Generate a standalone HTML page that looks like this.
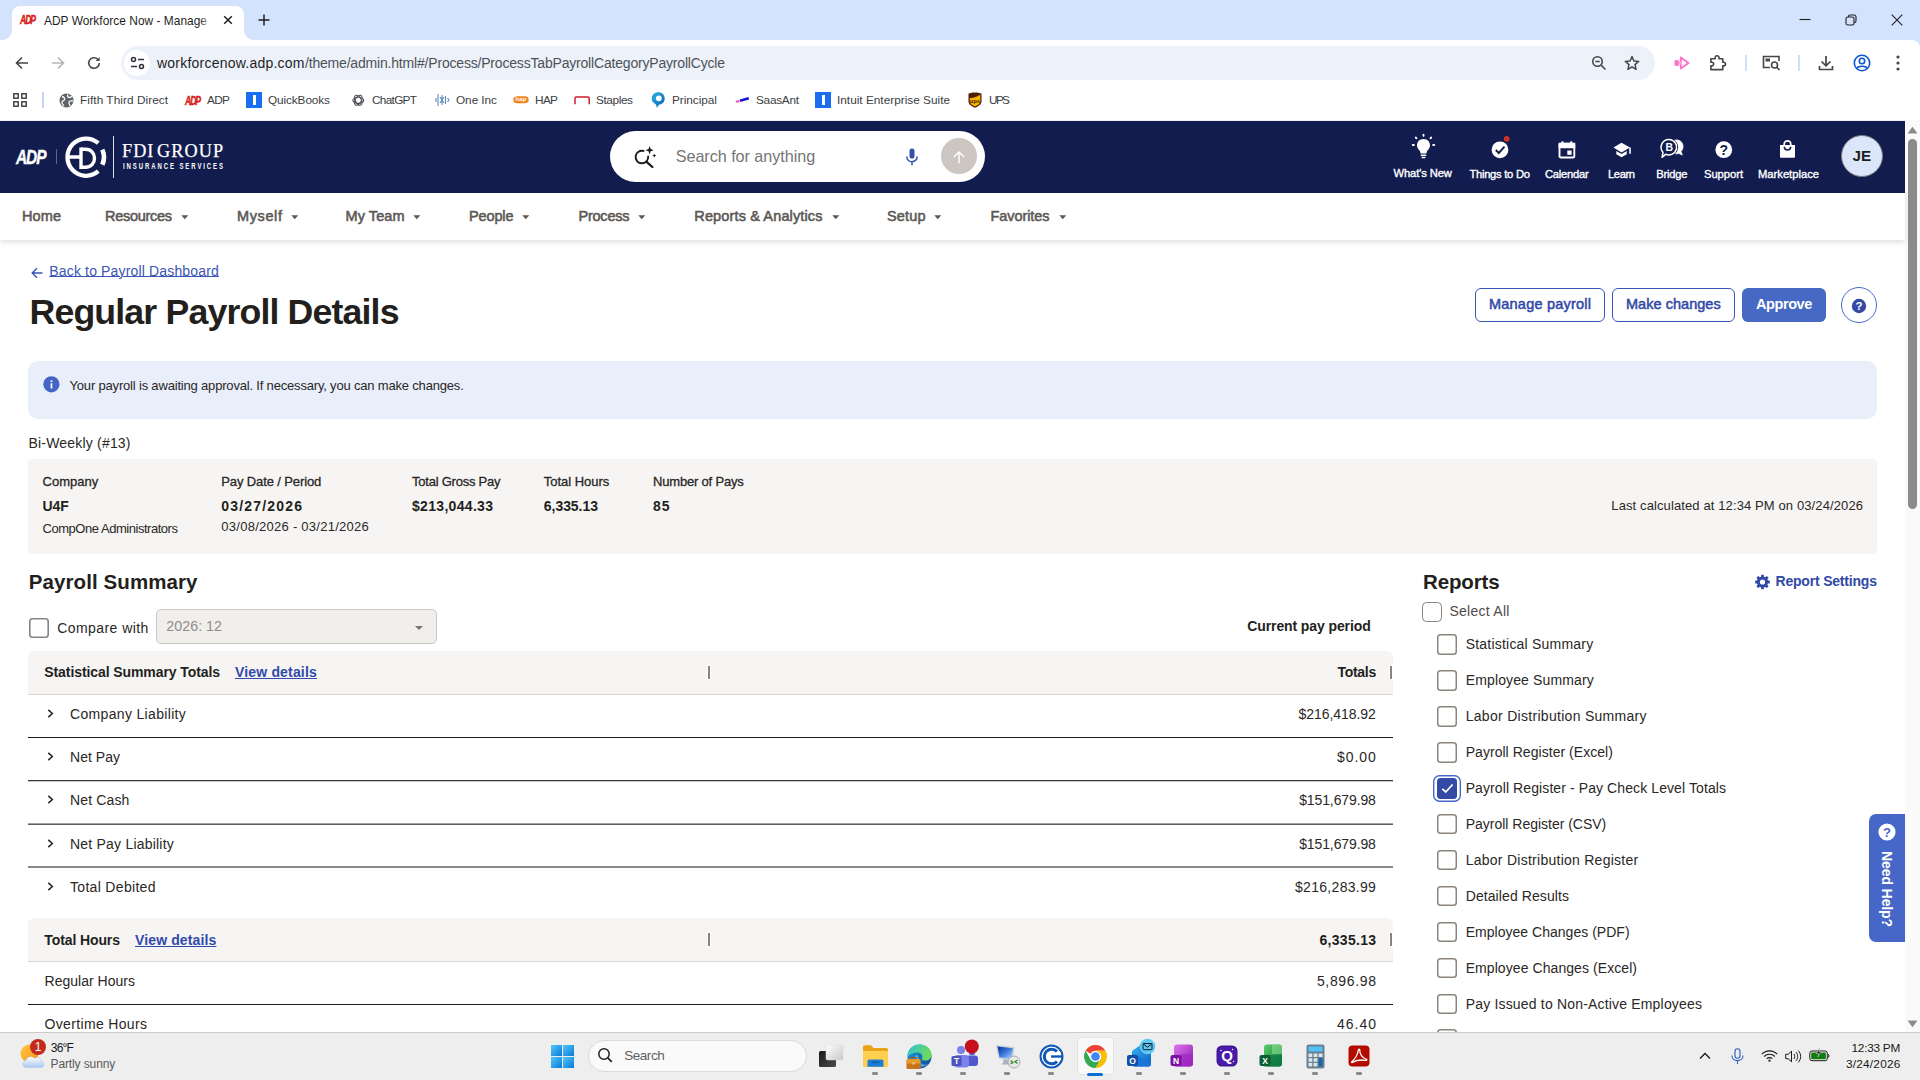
<!DOCTYPE html>
<html lang="en"><head><meta charset="utf-8"><title>ADP Workforce Now - Manage Payroll</title>
<style>
html,body{margin:0;padding:0;}
body{width:1920px;height:1080px;overflow:hidden;position:relative;background:#fff;font-family:"Liberation Sans",sans-serif;}
svg{position:absolute;overflow:visible;}
</style></head><body>

<div style="position:absolute;left:0px;top:0px;width:1920px;height:50px;background:#d3e3fd;"></div>
<svg style="left:0;top:0" width="260" height="41" viewBox="0 0 260 41"><path d="M0 40.500 C7.500 40 12 36 12 29 V14.500 C12 9.500 15.500 6 20.500 6 H235.500 C240.500 6 244 9.500 244 14.500 V29 C244 36 248.500 40 256 40.500 Z" fill="#fff"/></svg>
<div style="position:absolute;left:0px;top:40px;width:1920px;height:44px;background:#fff;border-radius:0 8px 0 0;"></div>
<div style="position:absolute;left:0px;top:84px;width:1920px;height:36px;background:#fff;"></div>
<div style="position:absolute;left:0px;top:120px;width:1920px;height:1px;background:#eceef1;"></div>
<div style="position:absolute;left:121px;top:46px;width:1534px;height:34px;background:#edf2fa;border-radius:17px;"></div>
<div style="position:absolute;left:124px;top:50px;width:26px;height:26px;background:#fff;border-radius:13px;"></div>
<span class="t" style="position:absolute;left:20px;top:13.89px;font:700 12.3px/12.3px 'Liberation Sans', sans-serif;color:#d81e1e;letter-spacing:-1.556px;white-space:pre;font-style:italic;-webkit-text-stroke:0.5px #d81e1e;transform:scaleX(0.7);transform-origin:0 0;">ADP</span>
<span class="t" style="position:absolute;left:44px;top:15.93px;font:400 11.9px/11.9px 'Liberation Sans', sans-serif;color:#1f1f1f;letter-spacing:0.034px;white-space:pre;">ADP Workforce Now - Manage</span>
<div style="position:absolute;left:200px;top:10px;width:14px;height:22px;background:linear-gradient(90deg,rgba(255,255,255,0),#fff);"></div>
<svg style="left:223px;top:15px" width="10" height="10" viewBox="0 0 10 10"><path d="M1.200 1.200 L8.800 8.800 M8.800 1.200 L1.200 8.800" stroke="#1f1f1f" stroke-width="1.500" fill="none"/></svg>
<svg style="left:258px;top:14px" width="12" height="12" viewBox="0 0 12 12"><path d="M6 0.500 V11.500 M0.500 6 H11.500" stroke="#1f1f1f" stroke-width="1.500" fill="none"/></svg>
<svg style="left:1799px;top:14px" width="12" height="12" viewBox="0 0 12 12"><path d="M0.500 5.500 H11.500" stroke="#1f1f1f" stroke-width="1.100" fill="none"/></svg>
<svg style="left:1845px;top:14px" width="12" height="12" viewBox="0 0 12 12"><rect x="1" y="3" width="8" height="8" rx="1.800" stroke="#1f1f1f" stroke-width="1.100" fill="none"/><path d="M3.500 3 V2.500 C3.500 1.600 4.100 1 5 1 H9 C10.200 1 11 1.800 11 3 V7 C11 7.900 10.400 8.500 9.500 8.500 H9" stroke="#1f1f1f" stroke-width="1.100" fill="none"/></svg>
<svg style="left:1891px;top:14px" width="12" height="12" viewBox="0 0 12 12"><path d="M0.700 0.700 L11.300 11.300 M11.300 0.700 L0.700 11.300" stroke="#1f1f1f" stroke-width="1.100" fill="none"/></svg>
<svg style="left:15px;top:56px" width="14" height="14" viewBox="0 0 14 14"><path d="M13 7 H1.500 M7 1.500 L1.500 7 L7 12.500" stroke="#444746" stroke-width="1.600" fill="none"/></svg>
<svg style="left:51px;top:56px" width="14" height="14" viewBox="0 0 14 14"><path d="M1 7 H12.500 M7 1.500 L12.500 7 L7 12.500" stroke="#b4b6b8" stroke-width="1.600" fill="none"/></svg>
<svg style="left:87px;top:56px" width="14" height="14" viewBox="0 0 14 14"><path d="M12.300 7 A5.300 5.300 0 1 1 10.700 3.200" stroke="#444746" stroke-width="1.600" fill="none"/><path d="M12.600 1 V5 H8.600 Z" fill="#444746"/></svg>
<svg style="left:130px;top:56px" width="15" height="14" viewBox="0 0 15 14"><g stroke="#30323a" stroke-width="1.500" fill="none"><circle cx="3.500" cy="3.500" r="2"/><path d="M8 3.500 H14"/><circle cx="11.500" cy="10.500" r="2"/><path d="M1 10.500 H7"/></g></svg>
<span class="t" style="position:absolute;left:157px;top:56.15px;font:400 14px/14px 'Liberation Sans', sans-serif;color:#1f1f1f;letter-spacing:0.227px;white-space:pre;">workforcenow.adp.com</span>
<span class="t" style="position:absolute;left:305px;top:56.15px;font:400 14px/14px 'Liberation Sans', sans-serif;color:#4d5156;letter-spacing:-0.188px;white-space:pre;">/theme/admin.html#/Process/ProcessTabPayrollCategoryPayrollCycle</span>
<svg style="left:1591px;top:55px" width="16" height="16" viewBox="0 0 16 16"><g stroke="#444746" stroke-width="1.600" fill="none"><circle cx="6.500" cy="6.500" r="4.700"/><path d="M10 10 L14.500 14.500 M4.300 6.500 H8.700"/></g></svg>
<svg style="left:1624px;top:55px" width="16" height="16" viewBox="0 0 16 16"><path d="M8 1.500 L9.900 6 L14.700 6.400 L11 9.600 L12.100 14.300 L8 11.800 L3.900 14.300 L5 9.600 L1.300 6.400 L6.100 6 Z" stroke="#444746" stroke-width="1.500" fill="none" stroke-linejoin="round"/></svg>
<svg style="left:1674px;top:56px" width="17" height="14" viewBox="0 0 17 14"><path d="M0.500 4.200 H4.800 V9.800 H0.500 Z" fill="#ff6ec7"/><path d="M6.800 1.500 L14.500 7 L6.800 12.500 Z" stroke="#ff6ec7" stroke-width="1.900" fill="none" stroke-linejoin="round"/><path d="M4.800 5.500 H7.500 V8.500 H4.800 Z" fill="#ffa8dc"/></svg>
<svg style="left:1709px;top:54px" width="18" height="18" viewBox="0 0 18 18"><path d="M2 5 H6.500 V3.800 C6.500 1.200 10.500 1.200 10.500 3.800 V5 H14.500 V8.700 H15.500 C18 8.700 18 12.500 15.500 12.500 H14.500 V16.500 H2 V12.500 H3 C5.500 12.500 5.500 8.700 3 8.700 H2 Z" stroke="#444746" stroke-width="1.700" fill="none" stroke-linejoin="round" transform="scale(0.95)"/></svg>
<div style="position:absolute;left:1744.5px;top:55px;width:2px;height:16px;background:#cfdff8;"></div>
<svg style="left:1762px;top:55px" width="19" height="16" viewBox="0 0 19 16"><g stroke="#444746" stroke-width="1.600" fill="none"><path d="M8 12.500 H1.500 V1.500 H17 V6"/><circle cx="12.500" cy="10" r="3"/><path d="M14.700 12.200 L17.500 15"/></g><path d="M3.500 3.500 H8 V6.500 H3.500 Z" fill="#444746"/></svg>
<div style="position:absolute;left:1798px;top:55px;width:2px;height:16px;background:#cfdff8;"></div>
<svg style="left:1818px;top:55px" width="16" height="16" viewBox="0 0 16 16"><g stroke="#444746" stroke-width="1.700" fill="none"><path d="M8 1 V10.500 M3.500 6.500 L8 10.800 L12.500 6.500"/><path d="M1.500 11 V14.500 H14.500 V11"/></g></svg>
<svg style="left:1853px;top:54px" width="18" height="18" viewBox="0 0 18 18"><g stroke="#0b57d0" stroke-width="1.600" fill="none"><circle cx="9" cy="9" r="7.700"/><circle cx="9" cy="7" r="2.700"/><path d="M3.800 14.200 C5.500 11.500 12.500 11.500 14.200 14.200"/></g></svg>
<svg style="left:1896px;top:55px" width="4" height="16" viewBox="0 0 4 16"><g fill="#444746"><circle cx="2" cy="2" r="1.600"/><circle cx="2" cy="8" r="1.600"/><circle cx="2" cy="14" r="1.600"/></g></svg>
<svg style="left:13px;top:93px" width="14" height="14" viewBox="0 0 14 14"><g stroke="#444746" stroke-width="1.500" fill="none"><rect x="0.800" y="0.800" width="4.400" height="4.400"/><rect x="8.800" y="0.800" width="4.400" height="4.400"/><rect x="0.800" y="8.800" width="4.400" height="4.400"/><rect x="8.800" y="8.800" width="4.400" height="4.400"/></g></svg>
<div style="position:absolute;left:42px;top:92px;width:2px;height:16px;background:#c3d5f4;"></div>
<svg style="left:59px;top:93px" width="15" height="15" viewBox="0 0 15 15"><circle cx="7.500" cy="7.500" r="7" fill="#5f6368"/><path d="M3 3.500 C5 4 6 5 5.500 6.500 C5 8 3.500 7.500 3 9 C2.500 10.500 4 11.500 5 13 M9 1.500 C8 3 9 4.500 10.500 4.500 C12 4.500 12.500 3.500 13 3.200 M13.800 8 C12 7.500 10 8 10 9.500 C10 11 11 11.500 11 13" stroke="#fff" stroke-width="1.300" fill="none"/></svg>
<span class="t" style="position:absolute;left:80px;top:95.01px;font:400 11.8px/11.8px 'Liberation Sans', sans-serif;color:#3c4043;letter-spacing:0.061px;white-space:pre;">Fifth Third Direct</span>
<span class="t" style="position:absolute;left:185px;top:95.19px;font:700 12.3px/12.3px 'Liberation Sans', sans-serif;color:#d81e1e;letter-spacing:-1.556px;white-space:pre;font-style:italic;-webkit-text-stroke:0.5px #d81e1e;transform:scaleX(0.7);transform-origin:0 0;">ADP</span>
<span class="t" style="position:absolute;left:207px;top:95.01px;font:400 11.8px/11.8px 'Liberation Sans', sans-serif;color:#3c4043;letter-spacing:-0.633px;white-space:pre;">ADP</span>
<div style="position:absolute;left:246px;top:92px;width:16px;height:16px;background:#1a6df0;"></div>
<div style="position:absolute;left:252.5px;top:95px;width:3px;height:10px;background:#fff;"></div>
<span class="t" style="position:absolute;left:268px;top:95.01px;font:400 11.8px/11.8px 'Liberation Sans', sans-serif;color:#3c4043;letter-spacing:-0.106px;white-space:pre;">QuickBooks</span>
<svg style="left:351.700px;top:93.700px" width="12.600" height="12.600" viewBox="0 0 15 15"><g stroke="#4a4d51" stroke-width="1.350" fill="none"><ellipse cx="7.500" cy="7.500" rx="6.500" ry="3.600"/><ellipse cx="7.500" cy="7.500" rx="6.500" ry="3.600" transform="rotate(60 7.500 7.500)"/><ellipse cx="7.500" cy="7.500" rx="6.500" ry="3.600" transform="rotate(120 7.500 7.500)"/></g></svg>
<span class="t" style="position:absolute;left:372px;top:95.01px;font:400 11.8px/11.8px 'Liberation Sans', sans-serif;color:#3c4043;letter-spacing:-0.695px;white-space:pre;">ChatGPT</span>
<svg style="left:435px;top:92px" width="15" height="16" viewBox="0 0 15 16"><g stroke="#5b8db8" stroke-width="1.100" fill="none"><path d="M1 6 V10 M3 2 V14 M5 5 L9 11 M9 5 L5 11 M10.500 4 V12 M12.500 6 L14 8 L12.500 10 M7 3 V13"/></g></svg>
<span class="t" style="position:absolute;left:456px;top:95.01px;font:400 11.8px/11.8px 'Liberation Sans', sans-serif;color:#3c4043;letter-spacing:-0.052px;white-space:pre;">One Inc</span>
<svg style="left:513px;top:96px" width="16" height="7.500" viewBox="0 0 17 9" preserveAspectRatio="none"><rect x="0.300" y="0.300" width="16.400" height="8.400" rx="4.200" fill="#f4821f"/><text x="8.500" y="6.500" font-family="Liberation Sans, sans-serif" font-size="6.500" font-weight="700" text-anchor="middle" fill="#fff">hap</text></svg>
<span class="t" style="position:absolute;left:535px;top:95.01px;font:400 11.8px/11.8px 'Liberation Sans', sans-serif;color:#3c4043;letter-spacing:-0.633px;white-space:pre;">HAP</span>
<svg style="left:573.500px;top:95.500px" width="16.500" height="9" viewBox="0 0 16.500 9"><path d="M1 8.300 V2.200 C1 1.400 1.400 1 2.200 1 H14 C14.800 1 15.200 1.400 15.200 2.200 V8.300" stroke="#cc1f2d" stroke-width="1.500" fill="none"/></svg>
<span class="t" style="position:absolute;left:596px;top:95.01px;font:400 11.8px/11.8px 'Liberation Sans', sans-serif;color:#3c4043;letter-spacing:-0.393px;white-space:pre;">Staples</span>
<svg style="left:651px;top:92px" width="14" height="16" viewBox="0 0 14 16"><defs><linearGradient id="pr" x1="0" y1="0" x2="1" y2="1"><stop offset="0" stop-color="#2fb4e9"/><stop offset="1" stop-color="#0061a8"/></linearGradient></defs><path d="M7.300 0.300 C11 0.300 13.700 3 13.700 6.500 C13.700 10 11 12.300 8 12.600 C7.500 14 6.800 15 5.500 15.700 C5.800 14 5.300 12.500 4 11.800 C1.800 10.800 0.700 8.800 0.700 6.500 C0.700 3 3.500 0.300 7.300 0.300 Z" fill="url(#pr)"/><circle cx="7.800" cy="6.300" r="2.900" fill="#fff"/></svg>
<span class="t" style="position:absolute;left:672px;top:95.01px;font:400 11.8px/11.8px 'Liberation Sans', sans-serif;color:#3c4043;letter-spacing:-0.031px;white-space:pre;">Principal</span>
<svg style="left:735px;top:96px" width="15" height="8" viewBox="0 0 15 8"><path d="M0.800 5.800 L4.500 5" stroke="#f04fc0" stroke-width="2" fill="none"/><path d="M5 4.700 L13.800 2.300" stroke="#1a10d0" stroke-width="2.600" fill="none"/></svg>
<span class="t" style="position:absolute;left:756px;top:95.01px;font:400 11.8px/11.8px 'Liberation Sans', sans-serif;color:#3c4043;letter-spacing:-0.268px;white-space:pre;">SaasAnt</span>
<div style="position:absolute;left:815px;top:92px;width:16px;height:16px;background:#1a6df0;"></div>
<div style="position:absolute;left:821.5px;top:95px;width:3px;height:10px;background:#fff;"></div>
<span class="t" style="position:absolute;left:837px;top:95.01px;font:400 11.8px/11.8px 'Liberation Sans', sans-serif;color:#3c4043;letter-spacing:0.009px;white-space:pre;">Intuit Enterprise Suite</span>
<svg style="left:968px;top:92px" width="14" height="16" viewBox="0 0 14 16"><path d="M0.500 1.500 C4 0 10 0 13.500 1.500 V9.500 C13.500 12.500 10 14.500 7 15.800 C4 14.500 0.500 12.500 0.500 9.500 Z" fill="#4b1e09"/><path d="M1.800 6 C5 6.500 9 5 12.300 2.500 V9.400 C12.300 11.600 9.500 13.300 7 14.400 C4.500 13.300 1.800 11.600 1.800 9.400 Z" fill="#f7b500"/><text x="7" y="11.300" font-family="Liberation Sans, sans-serif" font-size="5.500" font-weight="700" text-anchor="middle" fill="#4b1e09">ups</text></svg>
<span class="t" style="position:absolute;left:989px;top:95.01px;font:400 11.8px/11.8px 'Liberation Sans', sans-serif;color:#3c4043;letter-spacing:-1.633px;white-space:pre;">UPS</span>
<div style="position:absolute;left:0px;top:121px;width:1905px;height:72px;background:#121c4e;"></div>
<div style="position:absolute;left:1905px;top:120px;width:15px;height:912px;background:#fafafa;"></div>
<svg style="left:1907px;top:126px" width="11" height="8" viewBox="0 0 11 8"><path d="M0.500 7.500 L5.500 0.800 L10.500 7.500 Z" fill="#8b8b8b"/></svg>
<div style="position:absolute;left:1908px;top:139px;width:9px;height:370px;background:#8b8b8b;border-radius:4.5px;"></div>
<svg style="left:1907px;top:1020px" width="11" height="8" viewBox="0 0 11 8"><path d="M0.500 0.500 L5.500 7.200 L10.500 0.500 Z" fill="#8b8b8b"/></svg>
<span class="t" style="position:absolute;left:15.8px;top:146.72px;font:700 20.3px/20.3px 'Liberation Sans', sans-serif;color:#fff;letter-spacing:-1.348px;white-space:pre;font-style:italic;-webkit-text-stroke:0.4px #fff;transform:scaleX(0.76);transform-origin:0 0;">ADP</span>
<div style="position:absolute;left:56px;top:149px;width:1px;height:15px;background:rgba(255,255,255,0.32);"></div>
<svg style="left:64px;top:136px" width="43" height="43" viewBox="0 0 43 43"><g fill="none" stroke="#fff"><path d="M34.300 7.200 A18.600 18.600 0 1 0 34.300 35.200" stroke-width="4.300"/><path d="M38.300 13.600 A18.400 18.400 0 0 1 38.300 28.800" stroke-width="4.600"/><path d="M4.500 21 H17" stroke-width="3.500"/><path d="M17 11.500 V33" stroke-width="3.400"/><path d="M17 13.200 H21.500 C33.500 13.200 33.500 31.300 21.500 31.300 H17" stroke-width="3.400"/></g></svg>
<div style="position:absolute;left:113px;top:136px;width:1px;height:41.5px;background:rgba(255,255,255,0.85);"></div>
<span class="t" style="position:absolute;left:122px;top:141.79px;font:400 18.2px/18.2px 'Liberation Serif', serif;color:#fff;letter-spacing:1.061px;white-space:pre;word-spacing:-3px;-webkit-text-stroke:0.25px #fff;">FDI GROUP</span>
<span class="t" style="position:absolute;left:122.6px;top:162.17px;font:700 8.3px/8.3px 'Liberation Sans', sans-serif;color:#fff;letter-spacing:2.674px;white-space:pre;transform:scaleX(0.72);transform-origin:0 0;">INSURANCE SERVICES</span>
<div style="position:absolute;left:610px;top:131px;width:375px;height:51px;background:#fff;border-radius:25.500px;"></div>
<svg style="left:632px;top:144px" width="26" height="26" viewBox="0 0 26 26"><g stroke="#1f1b19" fill="none" stroke-linecap="round"><path d="M11.530 6.910 A6.300 6.300 0 1 0 16.180 12.450" stroke-width="1.900"/><path d="M14.600 17.800 L20.400 23" stroke-width="2.300"/></g><path d="M17.600 2 L18.700 5.100 L21.800 6.200 L18.700 7.300 L17.600 10.400 L16.500 7.300 L13.400 6.200 L16.500 5.100 Z" fill="#1f1b19"/><path d="M22.300 9.400 L22.900 11 L24.500 11.600 L22.900 12.200 L22.300 13.800 L21.700 12.200 L20.100 11.600 L21.700 11 Z" fill="#1f1b19"/></svg>
<span class="t" style="position:absolute;left:675.7px;top:148.29px;font:400 16.2px/16.2px 'Liberation Sans', sans-serif;color:#757575;letter-spacing:-0.049px;white-space:pre;">Search for anything</span>
<svg style="left:904.700px;top:148.400px" width="14" height="17.800" viewBox="0 0 14 20"><rect x="4.200" y="0.500" width="5.600" height="11.600" rx="2.800" fill="#3350a8"/><path d="M1.200 9.500 C1.200 17.300 12.800 17.300 12.800 9.500 M7 15.500 V19.500" stroke="#3350a8" stroke-width="1.700" fill="none"/></svg>
<div style="position:absolute;left:940.8px;top:137.9px;width:36.4px;height:36.4px;background:#cbc6c1;border-radius:50%;"></div>
<svg style="left:952.600px;top:150.500px" width="12" height="13" viewBox="0 0 12 13"><path d="M6 12.200 V1 M0.900 6.100 L6 1 L11.100 6.100" stroke="#fff" stroke-width="1.400" fill="none"/></svg>
<svg style="left:1411px;top:133px" width="25" height="26" viewBox="0 0 25 26"><g fill="#fff"><path d="M12.500 6 C8.600 6 6 8.900 6 12.300 C6 14.700 7.300 16.300 8.500 17.600 C9.200 18.400 9.500 19.300 9.500 20.500 H15.500 C15.500 19.300 15.800 18.400 16.500 17.600 C17.700 16.300 19 14.700 19 12.300 C19 8.900 16.400 6 12.500 6 Z"/><rect x="9.700" y="21.500" width="5.600" height="1.600" rx="0.600"/><rect x="10.500" y="23.800" width="4" height="1.500" rx="0.700"/><rect x="11.600" y="0.800" width="1.800" height="3" rx="0.800"/><rect x="4.200" y="3.600" width="1.900" height="2.800" rx="0.800" transform="rotate(-45 5.100 5)"/><rect x="18.900" y="3.600" width="1.900" height="2.800" rx="0.800" transform="rotate(45 19.900 5)"/><rect x="0.800" y="11" width="3" height="1.900" rx="0.800"/><rect x="21.200" y="11" width="3" height="1.900" rx="0.800"/></g></svg>
<svg style="left:1490px;top:134px" width="22" height="26" viewBox="0 0 22 26"><circle cx="10" cy="15.800" r="8.400" fill="#fff"/><path d="M5.800 16 L8.800 19 L14.500 12.600" stroke="#121c4e" stroke-width="1.900" fill="none"/><circle cx="16.700" cy="4.800" r="3.900" fill="#121c4e"/><circle cx="16.700" cy="4.800" r="2.900" fill="#d0311e"/></svg>
<svg style="left:1558px;top:140px" width="18" height="19" viewBox="0 0 18 19"><path d="M2.800 3.800 H15 C15.800 3.800 16.300 4.300 16.300 5.100 V16.200 C16.300 17 15.800 17.500 15 17.500 H2.800 C2 17.500 1.500 17 1.500 16.200 V5.100 C1.500 4.300 2 3.800 2.800 3.800 Z" stroke="#fff" stroke-width="1.900" fill="none"/><path d="M1.500 3.800 H16.300 V7.300 H1.500 Z M4.500 1.200 V4 M13.300 1.200 V4" stroke="#fff" stroke-width="1.900" fill="#fff"/><rect x="9.300" y="10.500" width="4.300" height="4.300" fill="#fff"/></svg>
<svg style="left:1613px;top:142px" width="19" height="16" viewBox="0 0 19 16"><path d="M8.500 0.800 L17 5.600 L8.500 10.400 L0.500 5.600 Z" fill="#fff"/><path d="M3.300 9 V12.300 L8.500 15.200 L13.800 12.300 V9 L8.500 12 Z" fill="#fff"/><path d="M17 5.600 V11.800" stroke="#fff" stroke-width="1.600"/></svg>
<svg style="left:1660px;top:138px" width="24" height="21" viewBox="0 0 24 21"><path d="M14 2.500 C19 0.500 23.300 4 23 9 C22.900 11 22 12.500 21 13.500 L22.300 17 L18.500 15.300 C17.500 15.800 16.500 16 15.500 16" fill="#fff" stroke="#fff" stroke-width="0.800"/><circle cx="9.200" cy="9.300" r="8.900" fill="#121c4e"/><path d="M9.200 1.400 A7.800 7.800 0 1 1 5.600 16.300 L2 19.300 L3 14.300 A7.800 7.800 0 0 1 9.200 1.400 Z" stroke="#fff" stroke-width="1.500" fill="#121c4e" stroke-linejoin="round"/><text x="9.400" y="13.300" font-family="Liberation Sans, sans-serif" font-size="10.500" font-weight="700" text-anchor="middle" fill="#fff">B</text></svg>
<svg style="left:1715px;top:141px" width="18" height="18" viewBox="0 0 18 18"><circle cx="8.800" cy="8.700" r="8.400" fill="#fff"/><text x="8.800" y="13.700" font-family="Liberation Sans, sans-serif" font-size="14" font-weight="700" text-anchor="middle" fill="#121c4e">?</text></svg>
<svg style="left:1779px;top:139px" width="17" height="20" viewBox="0 0 17 20"><path d="M1 6 H16 V17.500 C16 18.300 15.500 18.800 14.700 18.800 H2.300 C1.500 18.800 1 18.300 1 17.500 Z" fill="#fff"/><path d="M5.200 7 V5 C5.200 0.800 11.800 0.800 11.800 5 V7" stroke="#fff" stroke-width="1.700" fill="none"/><path d="M5.300 7.800 C5.300 12 11.700 12 11.700 7.800" stroke="#121c4e" stroke-width="1.500" fill="none"/></svg>
<span class="t" style="position:absolute;left:1393.5px;top:167.52px;font:400 11.2px/11.2px 'Liberation Sans', sans-serif;color:#fff;letter-spacing:-0.105px;white-space:pre;-webkit-text-stroke:0.35px #fff;">What's New</span>
<span class="t" style="position:absolute;left:1469.4px;top:168.62px;font:400 11.2px/11.2px 'Liberation Sans', sans-serif;color:#fff;letter-spacing:-0.258px;white-space:pre;-webkit-text-stroke:0.35px #fff;">Things to Do</span>
<span class="t" style="position:absolute;left:1545px;top:168.62px;font:400 11.2px/11.2px 'Liberation Sans', sans-serif;color:#fff;letter-spacing:-0.229px;white-space:pre;-webkit-text-stroke:0.35px #fff;">Calendar</span>
<span class="t" style="position:absolute;left:1608px;top:168.62px;font:400 11.2px/11.2px 'Liberation Sans', sans-serif;color:#fff;letter-spacing:-0.406px;white-space:pre;-webkit-text-stroke:0.35px #fff;">Learn</span>
<span class="t" style="position:absolute;left:1656.3px;top:168.62px;font:400 11.2px/11.2px 'Liberation Sans', sans-serif;color:#fff;letter-spacing:-0.229px;white-space:pre;-webkit-text-stroke:0.35px #fff;">Bridge</span>
<span class="t" style="position:absolute;left:1704px;top:168.62px;font:400 11.2px/11.2px 'Liberation Sans', sans-serif;color:#fff;letter-spacing:-0.031px;white-space:pre;-webkit-text-stroke:0.35px #fff;">Support</span>
<span class="t" style="position:absolute;left:1758px;top:168.62px;font:400 11.2px/11.2px 'Liberation Sans', sans-serif;color:#fff;letter-spacing:0.006px;white-space:pre;-webkit-text-stroke:0.35px #fff;">Marketplace</span>
<div style="position:absolute;left:1840.5px;top:135px;width:42px;height:42px;background:#dbe6fa;border-radius:50%;border:1px solid #7d7a78;box-sizing:border-box;"></div>
<span class="t" style="position:absolute;left:1852.6px;top:148.33px;font:700 15.2px/15.2px 'Liberation Sans', sans-serif;color:#221d1a;letter-spacing:-0.078px;white-space:pre;">JE</span>
<div style="position:absolute;left:0px;top:193px;width:1905px;height:47px;background:#fff;box-shadow:0 2px 6px rgba(0,0,0,0.140);"></div>
<span class="t" style="position:absolute;left:22px;top:208.93px;font:400 14.5px/14.5px 'Liberation Sans', sans-serif;color:#5c5855;letter-spacing:0.104px;white-space:pre;-webkit-text-stroke:0.55px #5c5855;">Home</span>
<span class="t" style="position:absolute;left:105px;top:208.93px;font:400 14.5px/14.5px 'Liberation Sans', sans-serif;color:#5c5855;letter-spacing:-0.289px;white-space:pre;-webkit-text-stroke:0.55px #5c5855;">Resources</span>
<svg style="left:180.8px;top:215px" width="8" height="5" viewBox="0 0 8 5"><path d="M0.300 0.300 H7.300 L3.800 4.200 Z" fill="#5c5855"/></svg>
<span class="t" style="position:absolute;left:237px;top:208.93px;font:400 14.5px/14.5px 'Liberation Sans', sans-serif;color:#5c5855;letter-spacing:0.619px;white-space:pre;-webkit-text-stroke:0.55px #5c5855;">Myself</span>
<svg style="left:290.5px;top:215px" width="8" height="5" viewBox="0 0 8 5"><path d="M0.300 0.300 H7.300 L3.800 4.200 Z" fill="#5c5855"/></svg>
<span class="t" style="position:absolute;left:345.5px;top:208.93px;font:400 14.5px/14.5px 'Liberation Sans', sans-serif;color:#5c5855;letter-spacing:0.073px;white-space:pre;-webkit-text-stroke:0.55px #5c5855;">My Team</span>
<svg style="left:413px;top:215px" width="8" height="5" viewBox="0 0 8 5"><path d="M0.300 0.300 H7.300 L3.800 4.200 Z" fill="#5c5855"/></svg>
<span class="t" style="position:absolute;left:469px;top:208.93px;font:400 14.5px/14.5px 'Liberation Sans', sans-serif;color:#5c5855;letter-spacing:-0.131px;white-space:pre;-webkit-text-stroke:0.55px #5c5855;">People</span>
<svg style="left:522px;top:215px" width="8" height="5" viewBox="0 0 8 5"><path d="M0.300 0.300 H7.300 L3.800 4.200 Z" fill="#5c5855"/></svg>
<span class="t" style="position:absolute;left:578.5px;top:208.93px;font:400 14.5px/14.5px 'Liberation Sans', sans-serif;color:#5c5855;letter-spacing:-0.232px;white-space:pre;-webkit-text-stroke:0.55px #5c5855;">Process</span>
<svg style="left:638px;top:215px" width="8" height="5" viewBox="0 0 8 5"><path d="M0.300 0.300 H7.300 L3.800 4.200 Z" fill="#5c5855"/></svg>
<span class="t" style="position:absolute;left:694.3px;top:208.93px;font:400 14.5px/14.5px 'Liberation Sans', sans-serif;color:#5c5855;letter-spacing:0.137px;white-space:pre;-webkit-text-stroke:0.55px #5c5855;">Reports &amp; Analytics</span>
<svg style="left:831.5px;top:215px" width="8" height="5" viewBox="0 0 8 5"><path d="M0.300 0.300 H7.300 L3.800 4.200 Z" fill="#5c5855"/></svg>
<span class="t" style="position:absolute;left:887px;top:208.93px;font:400 14.5px/14.5px 'Liberation Sans', sans-serif;color:#5c5855;letter-spacing:0.148px;white-space:pre;-webkit-text-stroke:0.55px #5c5855;">Setup</span>
<svg style="left:934px;top:215px" width="8" height="5" viewBox="0 0 8 5"><path d="M0.300 0.300 H7.300 L3.800 4.200 Z" fill="#5c5855"/></svg>
<span class="t" style="position:absolute;left:990.5px;top:208.93px;font:400 14.5px/14.5px 'Liberation Sans', sans-serif;color:#5c5855;letter-spacing:-0.080px;white-space:pre;-webkit-text-stroke:0.55px #5c5855;">Favorites</span>
<svg style="left:1058.5px;top:215px" width="8" height="5" viewBox="0 0 8 5"><path d="M0.300 0.300 H7.300 L3.800 4.200 Z" fill="#5c5855"/></svg>
<svg style="left:30.500px;top:266.500px" width="12" height="12" viewBox="0 0 12 12"><path d="M11.500 6 H1.200 M6 1.200 L1.200 6 L6 10.800" stroke="#3a55b5" stroke-width="1.400" fill="none"/></svg>
<span class="t" style="position:absolute;left:49.3px;top:264.15px;font:400 14px/14px 'Liberation Sans', sans-serif;color:#3a55b5;letter-spacing:0.156px;white-space:pre;text-decoration:underline;text-decoration-thickness:1px;text-underline-offset:0px;">Back to Payroll Dashboard</span>
<span class="t" style="position:absolute;left:29.5px;top:295.18px;font:700 35.7px/35.7px 'Liberation Sans', sans-serif;color:#231f1c;letter-spacing:-0.852px;white-space:pre;">Regular Payroll Details</span>
<div style="position:absolute;left:1475px;top:288px;width:130px;height:34px;background:#fff;border-radius:6px;border:1px solid #3a55b5;box-sizing:border-box;"></div>
<span class="t" style="position:absolute;left:1489px;top:297.03px;font:400 14.5px/14.5px 'Liberation Sans', sans-serif;color:#3048a6;letter-spacing:0.219px;white-space:pre;-webkit-text-stroke:0.5px #3048a6;">Manage payroll</span>
<div style="position:absolute;left:1612px;top:288px;width:123px;height:34px;background:#fff;border-radius:6px;border:1px solid #3a55b5;box-sizing:border-box;"></div>
<span class="t" style="position:absolute;left:1626px;top:297.03px;font:400 14.5px/14.5px 'Liberation Sans', sans-serif;color:#3048a6;letter-spacing:0.035px;white-space:pre;-webkit-text-stroke:0.5px #3048a6;">Make changes</span>
<div style="position:absolute;left:1742px;top:288px;width:84px;height:33.8px;background:#4669c4;border-radius:6px;"></div>
<span class="t" style="position:absolute;left:1756px;top:297.03px;font:700 14.5px/14.5px 'Liberation Sans', sans-serif;color:#fff;letter-spacing:-0.421px;white-space:pre;">Approve</span>
<div style="position:absolute;left:1840.8px;top:287.2px;width:36px;height:36px;background:#fff;border-radius:50%;border:1px solid #4669c4;box-sizing:border-box;"></div>
<svg style="left:1850.800px;top:297.600px" width="16" height="16" viewBox="0 0 16 16"><circle cx="8" cy="8" r="7.200" fill="#3349a5"/><text x="8" y="12" font-family="Liberation Sans, sans-serif" font-size="11.500" font-weight="700" text-anchor="middle" fill="#fff">?</text></svg>
<div style="position:absolute;left:28px;top:361px;width:1849px;height:58px;background:#e8eefa;border-radius:10px;"></div>
<svg style="left:42.900px;top:376.400px" width="17" height="17" viewBox="0 0 17 17"><circle cx="8.400" cy="8.300" r="8.100" fill="#4565c6"/><rect x="7.600" y="7.300" width="1.700" height="5.200" fill="#fff"/><rect x="7.600" y="4.300" width="1.700" height="1.800" fill="#fff"/></svg>
<span class="t" style="position:absolute;left:69.5px;top:379.00px;font:400 13px/13px 'Liberation Sans', sans-serif;color:#2a2725;letter-spacing:-0.182px;white-space:pre;">Your payroll is awaiting approval. If necessary, you can make changes.</span>
<span class="t" style="position:absolute;left:28.5px;top:436.15px;font:400 14px/14px 'Liberation Sans', sans-serif;color:#2a2725;letter-spacing:0.191px;white-space:pre;">Bi-Weekly (#13)</span>
<div style="position:absolute;left:28px;top:459px;width:1849px;height:95px;background:#f6f5f4;border-radius:4px;"></div>
<span class="t" style="position:absolute;left:42.5px;top:475.30px;font:400 13px/13px 'Liberation Sans', sans-serif;color:#2a2725;letter-spacing:0.027px;white-space:pre;-webkit-text-stroke:0.3px;">Company</span>
<span class="t" style="position:absolute;left:42.5px;top:499.45px;font:700 14px/14px 'Liberation Sans', sans-serif;color:#231f1c;letter-spacing:-0.077px;white-space:pre;">U4F</span>
<span class="t" style="position:absolute;left:42.5px;top:522.00px;font:400 13px/13px 'Liberation Sans', sans-serif;color:#2a2725;letter-spacing:-0.464px;white-space:pre;">CompOne Administrators</span>
<span class="t" style="position:absolute;left:221.3px;top:475.30px;font:400 13px/13px 'Liberation Sans', sans-serif;color:#2a2725;letter-spacing:-0.118px;white-space:pre;-webkit-text-stroke:0.3px;">Pay Date / Period</span>
<span class="t" style="position:absolute;left:221.3px;top:499.45px;font:700 14px/14px 'Liberation Sans', sans-serif;color:#231f1c;letter-spacing:1.180px;white-space:pre;">03/27/2026</span>
<span class="t" style="position:absolute;left:221.3px;top:520.30px;font:400 13px/13px 'Liberation Sans', sans-serif;color:#2a2725;letter-spacing:0.264px;white-space:pre;">03/08/2026 - 03/21/2026</span>
<span class="t" style="position:absolute;left:412px;top:475.30px;font:400 13px/13px 'Liberation Sans', sans-serif;color:#2a2725;letter-spacing:-0.233px;white-space:pre;-webkit-text-stroke:0.3px;">Total Gross Pay</span>
<span class="t" style="position:absolute;left:412px;top:499.45px;font:700 14px/14px 'Liberation Sans', sans-serif;color:#231f1c;letter-spacing:0.314px;white-space:pre;">$213,044.33</span>
<span class="t" style="position:absolute;left:543.8px;top:475.30px;font:400 13px/13px 'Liberation Sans', sans-serif;color:#2a2725;letter-spacing:-0.025px;white-space:pre;-webkit-text-stroke:0.3px;">Total Hours</span>
<span class="t" style="position:absolute;left:543.8px;top:499.45px;font:700 14px/14px 'Liberation Sans', sans-serif;color:#231f1c;letter-spacing:-0.043px;white-space:pre;">6,335.13</span>
<span class="t" style="position:absolute;left:653px;top:475.30px;font:400 13px/13px 'Liberation Sans', sans-serif;color:#2a2725;letter-spacing:-0.185px;white-space:pre;-webkit-text-stroke:0.3px;">Number of Pays</span>
<span class="t" style="position:absolute;left:653px;top:499.45px;font:700 14px/14px 'Liberation Sans', sans-serif;color:#231f1c;letter-spacing:0.922px;white-space:pre;">85</span>
<span class="t" style="position:absolute;left:1611.3px;top:499.00px;font:400 13px/13px 'Liberation Sans', sans-serif;color:#2a2725;letter-spacing:0.113px;white-space:pre;">Last calculated at 12:34 PM on 03/24/2026</span>
<span class="t" style="position:absolute;left:28.8px;top:572.25px;font:700 20.5px/20.5px 'Liberation Sans', sans-serif;color:#231f1c;letter-spacing:0.086px;white-space:pre;">Payroll Summary</span>
<div style="position:absolute;left:28.5px;top:617.5px;width:20.3px;height:20.3px;background:#fff;border-radius:3.5px;box-shadow:inset 0 0 0 1.600px #8a8480;"></div>
<span class="t" style="position:absolute;left:57.3px;top:621.15px;font:400 14px/14px 'Liberation Sans', sans-serif;color:#2a2725;letter-spacing:0.420px;white-space:pre;">Compare with</span>
<div style="position:absolute;left:156px;top:609px;width:281px;height:35px;background:#f1efec;border-radius:5px;border:1px solid #cbc7c3;box-sizing:border-box;"></div>
<span class="t" style="position:absolute;left:166.3px;top:618.70px;font:400 14.3px/14.3px 'Liberation Sans', sans-serif;color:#8f8c8a;letter-spacing:0.006px;white-space:pre;">2026: 12</span>
<svg style="left:414.500px;top:625.500px" width="8" height="4" viewBox="0 0 8 4"><path d="M0 0 H8 L4 4 Z" fill="#7a7673"/></svg>
<span class="t" style="position:absolute;left:1247.3px;top:619.15px;font:700 14px/14px 'Liberation Sans', sans-serif;color:#231f1c;letter-spacing:-0.109px;white-space:pre;">Current pay period</span>
<div style="position:absolute;left:28px;top:651px;width:1365px;height:43px;background:#f6f5f4;border-radius:6px 6px 0 0;"></div>
<div style="position:absolute;left:28px;top:694px;width:1365px;height:1px;background:#d8d5d2;"></div>
<span class="t" style="position:absolute;left:44.3px;top:665.15px;font:700 14px/14px 'Liberation Sans', sans-serif;color:#231f1c;letter-spacing:-0.089px;white-space:pre;">Statistical Summary Totals</span>
<span class="t" style="position:absolute;left:235px;top:665.15px;font:700 14px/14px 'Liberation Sans', sans-serif;color:#2f4aa8;letter-spacing:0.172px;white-space:pre;text-decoration:underline;text-decoration-thickness:1.300px;text-underline-offset:0.500px;">View details</span>
<span class="t" style="position:absolute;left:1337.5px;top:665.15px;font:700 14px/14px 'Liberation Sans', sans-serif;color:#231f1c;letter-spacing:-0.301px;white-space:pre;">Totals</span>
<div style="position:absolute;left:708px;top:666px;width:2px;height:13px;background:#8b827d;box-shadow:0 0 0 1px #fff;"></div>
<div style="position:absolute;left:1390px;top:666px;width:2px;height:13px;background:#8b827d;box-shadow:0 0 0 1px #fff;"></div>
<svg style="left:46.800px;top:708.9999999999999px" width="7" height="9" viewBox="0 0 7 9"><path d="M1.300 0.900 L5.300 4.500 L1.300 8.100" stroke="#2a2725" stroke-width="1.600" fill="none"/></svg>
<span class="t" style="position:absolute;left:70px;top:706.95px;font:400 14px/14px 'Liberation Sans', sans-serif;color:#2a2725;letter-spacing:0.331px;white-space:pre;">Company Liability</span>
<span class="t" style="position:absolute;left:1298.6px;top:706.95px;font:400 14px/14px 'Liberation Sans', sans-serif;color:#2a2725;letter-spacing:-0.056px;white-space:pre;">$216,418.92</span>
<svg style="left:46.800px;top:752.0999999999999px" width="7" height="9" viewBox="0 0 7 9"><path d="M1.300 0.900 L5.300 4.500 L1.300 8.100" stroke="#2a2725" stroke-width="1.600" fill="none"/></svg>
<span class="t" style="position:absolute;left:70px;top:750.05px;font:400 14px/14px 'Liberation Sans', sans-serif;color:#2a2725;letter-spacing:0.031px;white-space:pre;">Net Pay</span>
<span class="t" style="position:absolute;left:1336.9px;top:750.05px;font:400 14px/14px 'Liberation Sans', sans-serif;color:#2a2725;letter-spacing:0.988px;white-space:pre;">$0.00</span>
<svg style="left:46.800px;top:795.1999999999999px" width="7" height="9" viewBox="0 0 7 9"><path d="M1.300 0.900 L5.300 4.500 L1.300 8.100" stroke="#2a2725" stroke-width="1.600" fill="none"/></svg>
<span class="t" style="position:absolute;left:70px;top:793.15px;font:400 14px/14px 'Liberation Sans', sans-serif;color:#2a2725;letter-spacing:0.134px;white-space:pre;">Net Cash</span>
<span class="t" style="position:absolute;left:1299.2px;top:793.15px;font:400 14px/14px 'Liberation Sans', sans-serif;color:#2a2725;letter-spacing:-0.116px;white-space:pre;">$151,679.98</span>
<svg style="left:46.800px;top:838.9px" width="7" height="9" viewBox="0 0 7 9"><path d="M1.300 0.900 L5.300 4.500 L1.300 8.100" stroke="#2a2725" stroke-width="1.600" fill="none"/></svg>
<span class="t" style="position:absolute;left:70px;top:836.85px;font:400 14px/14px 'Liberation Sans', sans-serif;color:#2a2725;letter-spacing:0.213px;white-space:pre;">Net Pay Liability</span>
<span class="t" style="position:absolute;left:1299.2px;top:836.85px;font:400 14px/14px 'Liberation Sans', sans-serif;color:#2a2725;letter-spacing:-0.116px;white-space:pre;">$151,679.98</span>
<svg style="left:46.800px;top:881.9999999999999px" width="7" height="9" viewBox="0 0 7 9"><path d="M1.300 0.900 L5.300 4.500 L1.300 8.100" stroke="#2a2725" stroke-width="1.600" fill="none"/></svg>
<span class="t" style="position:absolute;left:70px;top:879.95px;font:400 14px/14px 'Liberation Sans', sans-serif;color:#2a2725;letter-spacing:0.315px;white-space:pre;">Total Debited</span>
<span class="t" style="position:absolute;left:1295px;top:879.95px;font:400 14px/14px 'Liberation Sans', sans-serif;color:#2a2725;letter-spacing:0.304px;white-space:pre;">$216,283.99</span>
<div style="position:absolute;left:28px;top:737px;width:1365px;height:1px;background:#1f1c1a;"></div>
<div style="position:absolute;left:28px;top:780px;width:1365px;height:1px;background:#3a3735;"></div>
<div style="position:absolute;left:28px;top:781px;width:1365px;height:1px;background:#c9c7c5;"></div>
<div style="position:absolute;left:28px;top:823px;width:1365px;height:1px;background:#a3a09e;"></div>
<div style="position:absolute;left:28px;top:824px;width:1365px;height:1px;background:#5e5b59;"></div>
<div style="position:absolute;left:28px;top:866px;width:1365px;height:1px;background:#8c8987;"></div>
<div style="position:absolute;left:28px;top:867px;width:1365px;height:1px;background:#8c8987;"></div>
<div style="position:absolute;left:28px;top:918px;width:1365px;height:43px;background:#f6f5f4;border-radius:6px 6px 0 0;"></div>
<div style="position:absolute;left:28px;top:961px;width:1365px;height:1px;background:#d8d5d2;"></div>
<span class="t" style="position:absolute;left:44.3px;top:933.15px;font:700 14px/14px 'Liberation Sans', sans-serif;color:#231f1c;letter-spacing:-0.105px;white-space:pre;">Total Hours</span>
<span class="t" style="position:absolute;left:135px;top:933.15px;font:700 14px/14px 'Liberation Sans', sans-serif;color:#2f4aa8;letter-spacing:0.127px;white-space:pre;text-decoration:underline;text-decoration-thickness:1.300px;text-underline-offset:0.500px;">View details</span>
<span class="t" style="position:absolute;left:1319.5px;top:933.15px;font:700 14px/14px 'Liberation Sans', sans-serif;color:#231f1c;letter-spacing:0.286px;white-space:pre;">6,335.13</span>
<div style="position:absolute;left:708px;top:933px;width:2px;height:13px;background:#8b827d;box-shadow:0 0 0 1px #fff;"></div>
<div style="position:absolute;left:1390px;top:933px;width:2px;height:13px;background:#8b827d;box-shadow:0 0 0 1px #fff;"></div>
<span class="t" style="position:absolute;left:44.5px;top:974.45px;font:400 14px/14px 'Liberation Sans', sans-serif;color:#2a2725;letter-spacing:0.020px;white-space:pre;">Regular Hours</span>
<span class="t" style="position:absolute;left:1316.9px;top:974.35px;font:400 14px/14px 'Liberation Sans', sans-serif;color:#2a2725;letter-spacing:0.671px;white-space:pre;">5,896.98</span>
<div style="position:absolute;left:28px;top:1004px;width:1365px;height:1px;background:#1f1c1a;"></div>
<span class="t" style="position:absolute;left:44.5px;top:1017.45px;font:400 14px/14px 'Liberation Sans', sans-serif;color:#2a2725;letter-spacing:0.344px;white-space:pre;">Overtime Hours</span>
<span class="t" style="position:absolute;left:1336.9px;top:1017.35px;font:400 14px/14px 'Liberation Sans', sans-serif;color:#2a2725;letter-spacing:1.038px;white-space:pre;">46.40</span>
<span class="t" style="position:absolute;left:1423.1px;top:571.65px;font:700 20.5px/20.5px 'Liberation Sans', sans-serif;color:#231f1c;letter-spacing:-0.161px;white-space:pre;">Reports</span>
<svg style="left:1755px;top:574px" width="15" height="16" viewBox="0 0 15 16"><g fill="#324aa8"><circle cx="7.500" cy="8" r="5.600"/><rect x="6.100" y="0.700" width="2.800" height="14.600" rx="0.500" transform="rotate(0 7.500 8)"/><rect x="6.100" y="0.700" width="2.800" height="14.600" rx="0.500" transform="rotate(45 7.500 8)"/><rect x="6.100" y="0.700" width="2.800" height="14.600" rx="0.500" transform="rotate(90 7.500 8)"/><rect x="6.100" y="0.700" width="2.800" height="14.600" rx="0.500" transform="rotate(135 7.500 8)"/></g><circle cx="7.500" cy="8" r="2.600" fill="#fff"/></svg>
<span class="t" style="position:absolute;left:1775.5px;top:573.95px;font:700 14px/14px 'Liberation Sans', sans-serif;color:#3048a6;letter-spacing:-0.195px;white-space:pre;">Report Settings</span>
<div style="position:absolute;left:1422px;top:602px;width:20px;height:20px;background:#fff;border-radius:4.500px;border:1px solid #8c857f;box-sizing:border-box;"></div>
<span class="t" style="position:absolute;left:1449.4px;top:604.15px;font:400 14px/14px 'Liberation Sans', sans-serif;color:#4f4b48;letter-spacing:0.267px;white-space:pre;">Select All</span>
<div style="position:absolute;left:1436.5px;top:634.3px;width:20.5px;height:20.5px;background:#fff;border-radius:3.5px;box-shadow:inset 0 0 0 1.500px #8c857f;"></div>
<span class="t" style="position:absolute;left:1465.7px;top:636.95px;font:400 14px/14px 'Liberation Sans', sans-serif;color:#2a2725;letter-spacing:0.211px;white-space:pre;">Statistical Summary</span>
<div style="position:absolute;left:1436.5px;top:670.2px;width:20.5px;height:20.5px;background:#fff;border-radius:3.5px;box-shadow:inset 0 0 0 1.500px #8c857f;"></div>
<span class="t" style="position:absolute;left:1465.7px;top:672.95px;font:400 14px/14px 'Liberation Sans', sans-serif;color:#2a2725;letter-spacing:0.137px;white-space:pre;">Employee Summary</span>
<div style="position:absolute;left:1436.5px;top:706.1px;width:20.5px;height:20.5px;background:#fff;border-radius:3.5px;box-shadow:inset 0 0 0 1.500px #8c857f;"></div>
<span class="t" style="position:absolute;left:1465.7px;top:708.95px;font:400 14px/14px 'Liberation Sans', sans-serif;color:#2a2725;letter-spacing:0.295px;white-space:pre;">Labor Distribution Summary</span>
<div style="position:absolute;left:1436.5px;top:742.1px;width:20.5px;height:20.5px;background:#fff;border-radius:3.5px;box-shadow:inset 0 0 0 1.500px #8c857f;"></div>
<span class="t" style="position:absolute;left:1465.7px;top:744.95px;font:400 14px/14px 'Liberation Sans', sans-serif;color:#2a2725;letter-spacing:0.041px;white-space:pre;">Payroll Register (Excel)</span>
<div style="position:absolute;left:1433.2px;top:774.6px;width:27.6px;height:27.6px;background:#fff;border-radius:6.500px;box-shadow:inset 0 0 0 1.400px #4667c8;"></div>
<div style="position:absolute;left:1436.5px;top:778.0px;width:20.6px;height:20.6px;background:#344ba6;border-radius:3.500px;"></div>
<svg style="left:1440.500px;top:783.0px" width="13" height="11" viewBox="0 0 13 11"><path d="M1.300 5.800 L4.700 9 L11.600 1.500" stroke="#fff" stroke-width="1.800" fill="none"/></svg>
<span class="t" style="position:absolute;left:1465.7px;top:780.95px;font:400 14px/14px 'Liberation Sans', sans-serif;color:#2a2725;letter-spacing:0.094px;white-space:pre;">Payroll Register - Pay Check Level Totals</span>
<div style="position:absolute;left:1436.5px;top:813.9px;width:20.5px;height:20.5px;background:#fff;border-radius:3.5px;box-shadow:inset 0 0 0 1.500px #8c857f;"></div>
<span class="t" style="position:absolute;left:1465.7px;top:816.95px;font:400 14px/14px 'Liberation Sans', sans-serif;color:#2a2725;letter-spacing:-0.011px;white-space:pre;">Payroll Register (CSV)</span>
<div style="position:absolute;left:1436.5px;top:849.8px;width:20.5px;height:20.5px;background:#fff;border-radius:3.5px;box-shadow:inset 0 0 0 1.500px #8c857f;"></div>
<span class="t" style="position:absolute;left:1465.7px;top:852.95px;font:400 14px/14px 'Liberation Sans', sans-serif;color:#2a2725;letter-spacing:0.260px;white-space:pre;">Labor Distribution Register</span>
<div style="position:absolute;left:1436.5px;top:885.7px;width:20.5px;height:20.5px;background:#fff;border-radius:3.5px;box-shadow:inset 0 0 0 1.500px #8c857f;"></div>
<span class="t" style="position:absolute;left:1465.7px;top:888.95px;font:400 14px/14px 'Liberation Sans', sans-serif;color:#2a2725;letter-spacing:0.091px;white-space:pre;">Detailed Results</span>
<div style="position:absolute;left:1436.5px;top:921.7px;width:20.5px;height:20.5px;background:#fff;border-radius:3.5px;box-shadow:inset 0 0 0 1.500px #8c857f;"></div>
<span class="t" style="position:absolute;left:1465.7px;top:924.95px;font:400 14px/14px 'Liberation Sans', sans-serif;color:#2a2725;letter-spacing:0.024px;white-space:pre;">Employee Changes (PDF)</span>
<div style="position:absolute;left:1436.5px;top:957.6px;width:20.5px;height:20.5px;background:#fff;border-radius:3.5px;box-shadow:inset 0 0 0 1.500px #8c857f;"></div>
<span class="t" style="position:absolute;left:1465.7px;top:960.95px;font:400 14px/14px 'Liberation Sans', sans-serif;color:#2a2725;letter-spacing:0.072px;white-space:pre;">Employee Changes (Excel)</span>
<div style="position:absolute;left:1436.5px;top:993.5px;width:20.5px;height:20.5px;background:#fff;border-radius:3.5px;box-shadow:inset 0 0 0 1.500px #8c857f;"></div>
<span class="t" style="position:absolute;left:1465.7px;top:996.95px;font:400 14px/14px 'Liberation Sans', sans-serif;color:#2a2725;letter-spacing:0.180px;white-space:pre;">Pay Issued to Non-Active Employees</span>
<div style="position:absolute;left:1436.5px;top:1029.4px;width:20.5px;height:20.5px;background:#fff;border-radius:3.5px;box-shadow:inset 0 0 0 1.500px #8c857f;"></div>
<div style="position:absolute;left:1869px;top:814px;width:36px;height:128px;background:#4667c8;border-radius:7px 0 0 7px;"></div>
<svg style="left:1878px;top:823px" width="18" height="18" viewBox="0 0 18 18"><circle cx="9" cy="9" r="8.600" fill="#fff"/><text x="9" y="13.600" font-family="Liberation Sans, sans-serif" font-size="13" font-weight="700" text-anchor="middle" fill="#4667c8">?</text></svg>
<div style="position:absolute;left:1887px;top:850.500px;width:0;height:0;"><span style="position:absolute;left:0;top:0;transform-origin:0 0;transform:rotate(90deg) translate(0,-50%);font:700 14px/16px 'Liberation Sans',sans-serif;color:#fff;white-space:pre;letter-spacing:-0.100px;">Need Help?</span></div>
<div style="position:absolute;left:0px;top:1032px;width:1920px;height:48px;background:#eeeeee;border-top:1px solid #c9c9c9;box-sizing:border-box;"></div>
<svg style="left:18px;top:1038px" width="30" height="32" viewBox="0 0 30 32"><defs><linearGradient id="sun" x1="0" y1="0" x2="1" y2="1"><stop offset="0" stop-color="#ffc83d"/><stop offset="1" stop-color="#f7941d"/></linearGradient><linearGradient id="cl" x1="0" y1="0" x2="0" y2="1"><stop offset="0" stop-color="#ffffff"/><stop offset="1" stop-color="#a9c8f2"/></linearGradient></defs><circle cx="11.500" cy="15.500" r="9" fill="url(#sun)"/><path d="M8.500 29.500 C3.500 29.500 3.500 23 8 22.500 C8.500 18.500 14 17.500 16.500 20.500 C19 18.500 23.500 20 23.500 23.500 C27 24 26.500 29.500 23 29.500 Z" fill="url(#cl)" stroke="#9dbce8" stroke-width="0.400"/><circle cx="20" cy="9" r="8" fill="#c42b1c"/><text x="20" y="13.300" font-family="Liberation Sans, sans-serif" font-size="12" text-anchor="middle" fill="#fff">1</text></svg>
<span class="t" style="position:absolute;left:50.8px;top:1041.64px;font:400 12px/12px 'Liberation Sans', sans-serif;color:#1a1a1a;letter-spacing:-0.828px;white-space:pre;">36°F</span>
<span class="t" style="position:absolute;left:50.5px;top:1057.84px;font:400 12px/12px 'Liberation Sans', sans-serif;color:#5a5a5a;letter-spacing:-0.112px;white-space:pre;">Partly sunny</span>
<svg style="left:551px;top:1044.500px" width="23" height="23" viewBox="0 0 23 23"><defs><linearGradient id="wl" x1="0" y1="0" x2="1" y2="1"><stop offset="0" stop-color="#50c8ff"/><stop offset="1" stop-color="#0a78d4"/></linearGradient></defs><g fill="url(#wl)"><rect x="0" y="0" width="11" height="11"/><rect x="12" y="0" width="11" height="11"/><rect x="0" y="12" width="11" height="11"/><rect x="12" y="12" width="11" height="11"/></g></svg>
<div style="position:absolute;left:587.5px;top:1040px;width:219px;height:32px;background:#fafafa;border-radius:16px;border:1px solid #dadada;box-sizing:border-box;"></div>
<svg style="left:597px;top:1047px" width="16" height="16" viewBox="0 0 16 16"><circle cx="7" cy="7" r="5.200" stroke="#1f1f1f" stroke-width="1.500" fill="none"/><path d="M10.800 10.800 L14.800 14.800" stroke="#1f1f1f" stroke-width="1.700" fill="none"/></svg>
<span class="t" style="position:absolute;left:624.2px;top:1048.97px;font:400 13.5px/13.5px 'Liberation Sans', sans-serif;color:#5f5f5f;letter-spacing:-0.456px;white-space:pre;">Search</span>
<svg style="left:819px;top:1045px" width="24" height="22" viewBox="0 0 24 22"><defs><linearGradient id="tv1" x1="0" y1="0" x2="1" y2="1"><stop offset="0" stop-color="#ffffff"/><stop offset="1" stop-color="#c8c8c8"/></linearGradient><linearGradient id="tv2" x1="0" y1="0" x2="1" y2="1"><stop offset="0" stop-color="#1a1a1a"/><stop offset="1" stop-color="#4a4a4a"/></linearGradient></defs><rect x="0" y="6" width="17" height="16" rx="1.500" fill="url(#tv2)"/><rect x="7" y="0" width="17" height="15" rx="1.500" fill="url(#tv1)" stroke="#d8d8d8" stroke-width="0.500"/></svg>
<svg style="left:862.500px;top:1045px" width="25" height="22" viewBox="0 0 25 22"><path d="M0 2 C0 1 0.800 0.300 1.800 0.300 H8 L10.500 3 H23 C24.200 3 25 3.800 25 5 V20 C25 21 24.200 21.700 23.200 21.700 H1.800 C0.800 21.700 0 21 0 20 Z" fill="#e8a317"/><path d="M0 6 H25 V20 C25 21 24.200 21.700 23.200 21.700 H1.800 C0.800 21.700 0 21 0 20 Z" fill="#ffd04f"/><path d="M4.500 21.700 V16.500 C4.500 15.200 5.300 14.500 6.500 14.500 H18.500 C19.700 14.500 20.500 15.200 20.500 16.500 V21.700 Z" fill="#1b7fd6"/><rect x="8.500" y="16.500" width="8" height="1.800" rx="0.900" fill="#0f5fb0"/></svg>
<div style="position:absolute;left:872px;top:1072px;width:6px;height:2.5px;background:#8a8a8a;border-radius:1.2px;"></div>
<svg style="left:906px;top:1043.500px" width="26" height="26" viewBox="0 0 26 26"><defs><linearGradient id="eg1" x1="0" y1="0" x2="1" y2="0.300"><stop offset="0" stop-color="#2bc3d2"/><stop offset="1" stop-color="#6ddb5e"/></linearGradient><linearGradient id="eg2" x1="0" y1="0" x2="1" y2="1"><stop offset="0" stop-color="#1b9de2"/><stop offset="1" stop-color="#0c4a9a"/></linearGradient></defs><circle cx="13.500" cy="12.500" r="12" fill="url(#eg2)"/><path d="M1.500 12.500 C1.500 5 7.500 0.500 13.500 0.500 C21 0.500 25.500 6 25.500 10.500 C25.500 14.500 22.500 16.500 19.500 16.500 C17 16.500 15.500 15.500 15.800 14.500 C17.200 12.500 16 8.500 11.500 8.500 C6 8.500 2.500 12 1.500 12.500 Z" fill="url(#eg1)"/><path d="M10 11 C7.500 14 8.500 19.500 13 22 C16 23.500 20 22.500 22.500 20 C18 22 12 19 12.500 14 C12.600 12.500 11.500 10.500 10 11 Z" fill="#fff" opacity="0.350"/><rect x="0.500" y="15" width="14" height="10" rx="1.500" fill="#c8731a"/><rect x="0.500" y="15" width="14" height="4.500" rx="1.500" fill="#e89a2c"/><path d="M5 15 V13.500 H10 V15" stroke="#a85c12" stroke-width="1.200" fill="none"/><rect x="6.500" y="18.500" width="2" height="2" fill="#f5d28a"/></svg>
<div style="position:absolute;left:916px;top:1072px;width:6px;height:2.5px;background:#8a8a8a;border-radius:1.2px;"></div>
<svg style="left:951px;top:1040px" width="30" height="29" viewBox="0 0 30 29"><circle cx="21" cy="12" r="3.200" fill="#5059c9"/><rect x="15" y="15.500" width="12" height="10.500" rx="3" fill="#5059c9"/><circle cx="10" cy="10" r="4" fill="#7b83eb"/><rect x="3" y="15" width="15" height="12.500" rx="3.500" fill="#7b83eb"/><rect x="0.500" y="16" width="10" height="10" rx="1.500" fill="#4b53bc"/><text x="5.500" y="24.300" font-family="Liberation Sans, sans-serif" font-size="8.500" font-weight="700" text-anchor="middle" fill="#fff">T</text><circle cx="20.800" cy="6.500" r="7" fill="#c50f1f"/></svg>
<div style="position:absolute;left:960px;top:1072px;width:6px;height:2.5px;background:#8a8a8a;border-radius:1.2px;"></div>
<svg style="left:995px;top:1044px" width="26" height="25" viewBox="0 0 26 25"><defs><linearGradient id="rd" x1="0" y1="0" x2="1" y2="1"><stop offset="0" stop-color="#0a2a9a"/><stop offset="0.500" stop-color="#3d7be0"/><stop offset="1" stop-color="#bfe0ff"/></linearGradient></defs><path d="M1 1 L19.500 3 L17.500 16.500 L3.500 14.500 Z" fill="#c9d3dc"/><path d="M2.500 2.500 L18 4.200 L16.300 15 L4.500 13.300 Z" fill="url(#rd)"/><path d="M8 15 L13 15.800 L13 19 L17 20.500 L6 20.500 L8.500 18.500 Z" fill="#aab4bd"/><circle cx="19" cy="18" r="6" fill="#e9e9e9" stroke="#9a9a9a" stroke-width="0.800"/><path d="M15.500 16.500 L18 18.500 L15.500 20 M22.500 16 L20 17.800 L22.500 19.500" stroke="#2e8b2e" stroke-width="1.300" fill="none"/></svg>
<div style="position:absolute;left:1004px;top:1072px;width:6px;height:2.5px;background:#8a8a8a;border-radius:1.2px;"></div>
<svg style="left:1039px;top:1044px" width="25" height="25" viewBox="0 0 25 25"><circle cx="12.500" cy="12.500" r="11" stroke="#0f58b8" stroke-width="2" fill="#fff"/><path d="M18 7.600 A7.300 7.300 0 1 0 18 17.400" stroke="#0f58b8" stroke-width="3" fill="none"/><path d="M12 12.500 H23" stroke="#0f58b8" stroke-width="2.400"/></svg>
<div style="position:absolute;left:1048px;top:1072px;width:6px;height:2.5px;background:#8a8a8a;border-radius:1.2px;"></div>
<div style="position:absolute;left:1076.5px;top:1037px;width:37px;height:38px;background:#f9f9f9;border-radius:4px;border:1px solid #e2e2e2;box-sizing:border-box;"></div>
<svg style="left:1082.500px;top:1043.500px" width="25" height="25" viewBox="0 0 48 48"><circle cx="24" cy="24" r="22" fill="#fff"/><path d="M24 2 A22 22 0 0 1 43.050 13 L24 13 A11 11 0 0 0 14.470 18.500 L4.950 13 A22 22 0 0 1 24 2 Z" fill="#ea4335"/><path d="M43.050 13 A22 22 0 0 1 24 46 L33.530 29.500 A11 11 0 0 0 33.530 18.500 L24 13 Z" fill="#fbbc04"/><path d="M24 46 A22 22 0 0 1 4.950 13 L14.470 29.500 A11 11 0 0 0 33.530 29.500 Z" fill="#34a853"/><path d="M43.050 13 H24 L33.530 18.500 Z" fill="#fbbc04"/><circle cx="24" cy="24" r="10.500" fill="#fff"/><circle cx="24" cy="24" r="8.300" fill="#4285f4"/></svg>
<div style="position:absolute;left:1087px;top:1072.5px;width:16px;height:3px;background:#0b6fd6;border-radius:1.5px;"></div>
<svg style="left:1126px;top:1039px" width="32" height="30" viewBox="0 0 32 30"><defs><linearGradient id="ol" x1="0" y1="0" x2="1" y2="1"><stop offset="0" stop-color="#35b8f1"/><stop offset="1" stop-color="#0f5fc2"/></linearGradient></defs><path d="M6 12 L16 5 L25 12 V25 C25 26.500 24 27.500 22.500 27.500 H8.500 C7 27.500 6 26.500 6 25 Z" fill="url(#ol)"/><path d="M6 14 L25 24 V25 C25 26.500 24 27.500 22.500 27.500 H8.500 C7 27.500 6 26.500 6 25 Z" fill="#1a73d9"/><rect x="1" y="16" width="11" height="11" rx="2" fill="#0f4fa8"/><text x="6.500" y="25" font-family="Liberation Sans, sans-serif" font-size="8.500" font-weight="700" text-anchor="middle" fill="#fff">O</text><circle cx="21.500" cy="7.500" r="7.800" fill="#5fc9f5"/><rect x="17" y="4.500" width="9" height="6.200" rx="0.800" stroke="#0c1a2a" stroke-width="1" fill="none"/><path d="M17.300 5 L21.500 8.200 L25.700 5" stroke="#0c1a2a" stroke-width="1" fill="none"/></svg>
<div style="position:absolute;left:1136px;top:1072px;width:6px;height:2.5px;background:#8a8a8a;border-radius:1.2px;"></div>
<svg style="left:1170px;top:1044px" width="24" height="24" viewBox="0 0 24 24"><defs><linearGradient id="on" x1="0" y1="0" x2="1" y2="1"><stop offset="0" stop-color="#e072ee"/><stop offset="1" stop-color="#8a1fb0"/></linearGradient></defs><rect x="4" y="0.500" width="19" height="22" rx="3" fill="url(#on)"/><path d="M12 10 H23 V19.500 C23 21.300 21.800 22.500 20 22.500 H4 V18 C4 14 8 14 12 10 Z" fill="#a02ac4" opacity="0.750"/><rect x="0.500" y="11" width="11" height="11" rx="2" fill="#7a12a0"/><text x="6" y="20" font-family="Liberation Sans, sans-serif" font-size="8.500" font-weight="700" text-anchor="middle" fill="#fff">N</text></svg>
<div style="position:absolute;left:1180px;top:1072px;width:6px;height:2.5px;background:#8a8a8a;border-radius:1.2px;"></div>
<svg style="left:1215.500px;top:1045px" width="22" height="22" viewBox="0 0 22 22"><rect x="0.500" y="0.500" width="21" height="21" rx="5.500" fill="#3b148c"/><rect x="1.500" y="1.500" width="19" height="19" rx="4.800" fill="#4a1aa8"/><text x="11" y="16.300" font-family="Liberation Sans, sans-serif" font-size="15" font-weight="700" text-anchor="middle" fill="#fff">Q</text><circle cx="5" cy="5.500" r="0.800" fill="#fff"/><circle cx="16.500" cy="4.500" r="0.700" fill="#fff"/><circle cx="17.500" cy="16.500" r="0.700" fill="#fff"/></svg>
<div style="position:absolute;left:1224px;top:1072px;width:6px;height:2.5px;background:#8a8a8a;border-radius:1.2px;"></div>
<svg style="left:1258.500px;top:1044px" width="24" height="24" viewBox="0 0 24 24"><defs><linearGradient id="xl" x1="0" y1="0" x2="1" y2="1"><stop offset="0" stop-color="#5bd06a"/><stop offset="1" stop-color="#0b6a3a"/></linearGradient></defs><rect x="5" y="0.500" width="18" height="22" rx="3" fill="url(#xl)"/><path d="M13 0.500 H20 C21.800 0.500 23 1.700 23 3.500 V10 H13 Z" fill="#8be08f" opacity="0.600"/><path d="M5 11 H23 V19.500 C23 21.300 21.800 22.500 20 22.500 H5 Z" fill="#0e7a43" opacity="0.800"/><rect x="0.500" y="11" width="11" height="11" rx="2" fill="#0a5e33"/><text x="6" y="20" font-family="Liberation Sans, sans-serif" font-size="8.500" font-weight="700" text-anchor="middle" fill="#fff">X</text></svg>
<div style="position:absolute;left:1268px;top:1072px;width:6px;height:2.5px;background:#8a8a8a;border-radius:1.2px;"></div>
<svg style="left:1305.500px;top:1043.500px" width="19" height="25" viewBox="0 0 19 25"><rect x="0.500" y="0.500" width="18" height="24" rx="2" fill="#6a7f8e"/><rect x="2.500" y="2.500" width="14" height="5" fill="#4fc3f7"/><g fill="#dfe6ea"><rect x="2.500" y="9.500" width="3.800" height="3.500"/><rect x="7.600" y="9.500" width="3.800" height="3.500"/><rect x="12.700" y="9.500" width="3.800" height="3.500"/><rect x="2.500" y="14.200" width="3.800" height="3.500"/><rect x="7.600" y="14.200" width="3.800" height="3.500"/><rect x="2.500" y="18.900" width="3.800" height="3.500"/><rect x="7.600" y="18.900" width="3.800" height="3.500"/></g><rect x="12.700" y="14.200" width="3.800" height="8.200" fill="#1565a8"/></svg>
<div style="position:absolute;left:1312px;top:1072px;width:6px;height:2.5px;background:#8a8a8a;border-radius:1.2px;"></div>
<svg style="left:1348px;top:1045px" width="22" height="22" viewBox="0 0 22 22"><rect x="0.500" y="0.500" width="21" height="21" rx="4" fill="#b30b00"/><path d="M4 16.500 C6.500 14.500 9.500 9.500 10.200 5.500 C10.500 3.800 12 3.800 11.800 5.500 C11.500 9 14.500 13 18 14 C19.500 14.500 19 15.500 17.500 15.300 C13 14.600 8.500 15 5 17.300 C3.800 18 3.200 17.200 4 16.500 Z" stroke="#fff" stroke-width="1.300" fill="none" stroke-linejoin="round"/></svg>
<div style="position:absolute;left:1356px;top:1072px;width:6px;height:2.5px;background:#8a8a8a;border-radius:1.2px;"></div>
<svg style="left:1699px;top:1052px" width="12" height="8" viewBox="0 0 12 8"><path d="M1 6.500 L6 1.500 L11 6.500" stroke="#1a1a1a" stroke-width="1.300" fill="none"/></svg>
<svg style="left:1730.500px;top:1047.500px" width="13" height="17" viewBox="0 0 13 17"><rect x="4" y="0.800" width="5" height="9.500" rx="2.500" stroke="#2a5db8" stroke-width="1.100" fill="none"/><path d="M1 7.500 C1 14.300 12 14.300 12 7.500 M6.500 12.800 V16" stroke="#2a5db8" stroke-width="1.100" fill="none"/></svg>
<svg style="left:1760.500px;top:1049.500px" width="17" height="12" viewBox="0 0 17 12"><g stroke="#1a1a1a" stroke-width="1.100" fill="none"><path d="M0.800 4.200 C5 -0.300 12 -0.300 16.200 4.200"/><path d="M3.200 6.500 C6 3.500 11 3.500 13.800 6.500"/><path d="M5.700 8.700 C7.200 7.200 9.800 7.200 11.300 8.700"/></g><circle cx="8.500" cy="10.700" r="1.100" fill="#1a1a1a"/></svg>
<svg style="left:1785px;top:1049.500px" width="17" height="13" viewBox="0 0 17 13"><g stroke="#1a1a1a" stroke-width="1" fill="none"><path d="M0.700 4.300 H3.200 L6.500 1.200 V11.800 L3.200 8.700 H0.700 Z"/><path d="M8.800 4 C10 5.300 10 7.700 8.800 9"/><path d="M11 2.200 C13.200 4.500 13.200 8.500 11 10.800"/><path d="M13.200 0.600 C16.500 4 16.500 9 13.200 12.400"/></g></svg>
<svg style="left:1808.500px;top:1047px" width="21" height="15" viewBox="0 0 21 15"><rect x="0.800" y="4" width="17.500" height="9.700" rx="2.200" stroke="#1a1a1a" stroke-width="1" fill="none"/><rect x="2.200" y="5.400" width="14.700" height="6.900" rx="1" fill="#107c10"/><path d="M19 7.200 C20.300 7.500 20.300 10.300 19 10.600" stroke="#1a1a1a" stroke-width="1" fill="none"/><path d="M10.600 0.500 L7.500 6.500 H9.800 L8.800 10 L12.300 4.800 H10 Z" fill="#1a1a1a" stroke="#eeeeee" stroke-width="0.500"/></svg>
<span class="t" style="position:absolute;left:1851.5px;top:1043.01px;font:400 11.8px/11.8px 'Liberation Sans', sans-serif;color:#1a1a1a;letter-spacing:-0.243px;white-space:pre;">12:33 PM</span>
<span class="t" style="position:absolute;left:1846px;top:1059.01px;font:400 11.8px/11.8px 'Liberation Sans', sans-serif;color:#1a1a1a;letter-spacing:0.227px;white-space:pre;">3/24/2026</span>

</body></html>
